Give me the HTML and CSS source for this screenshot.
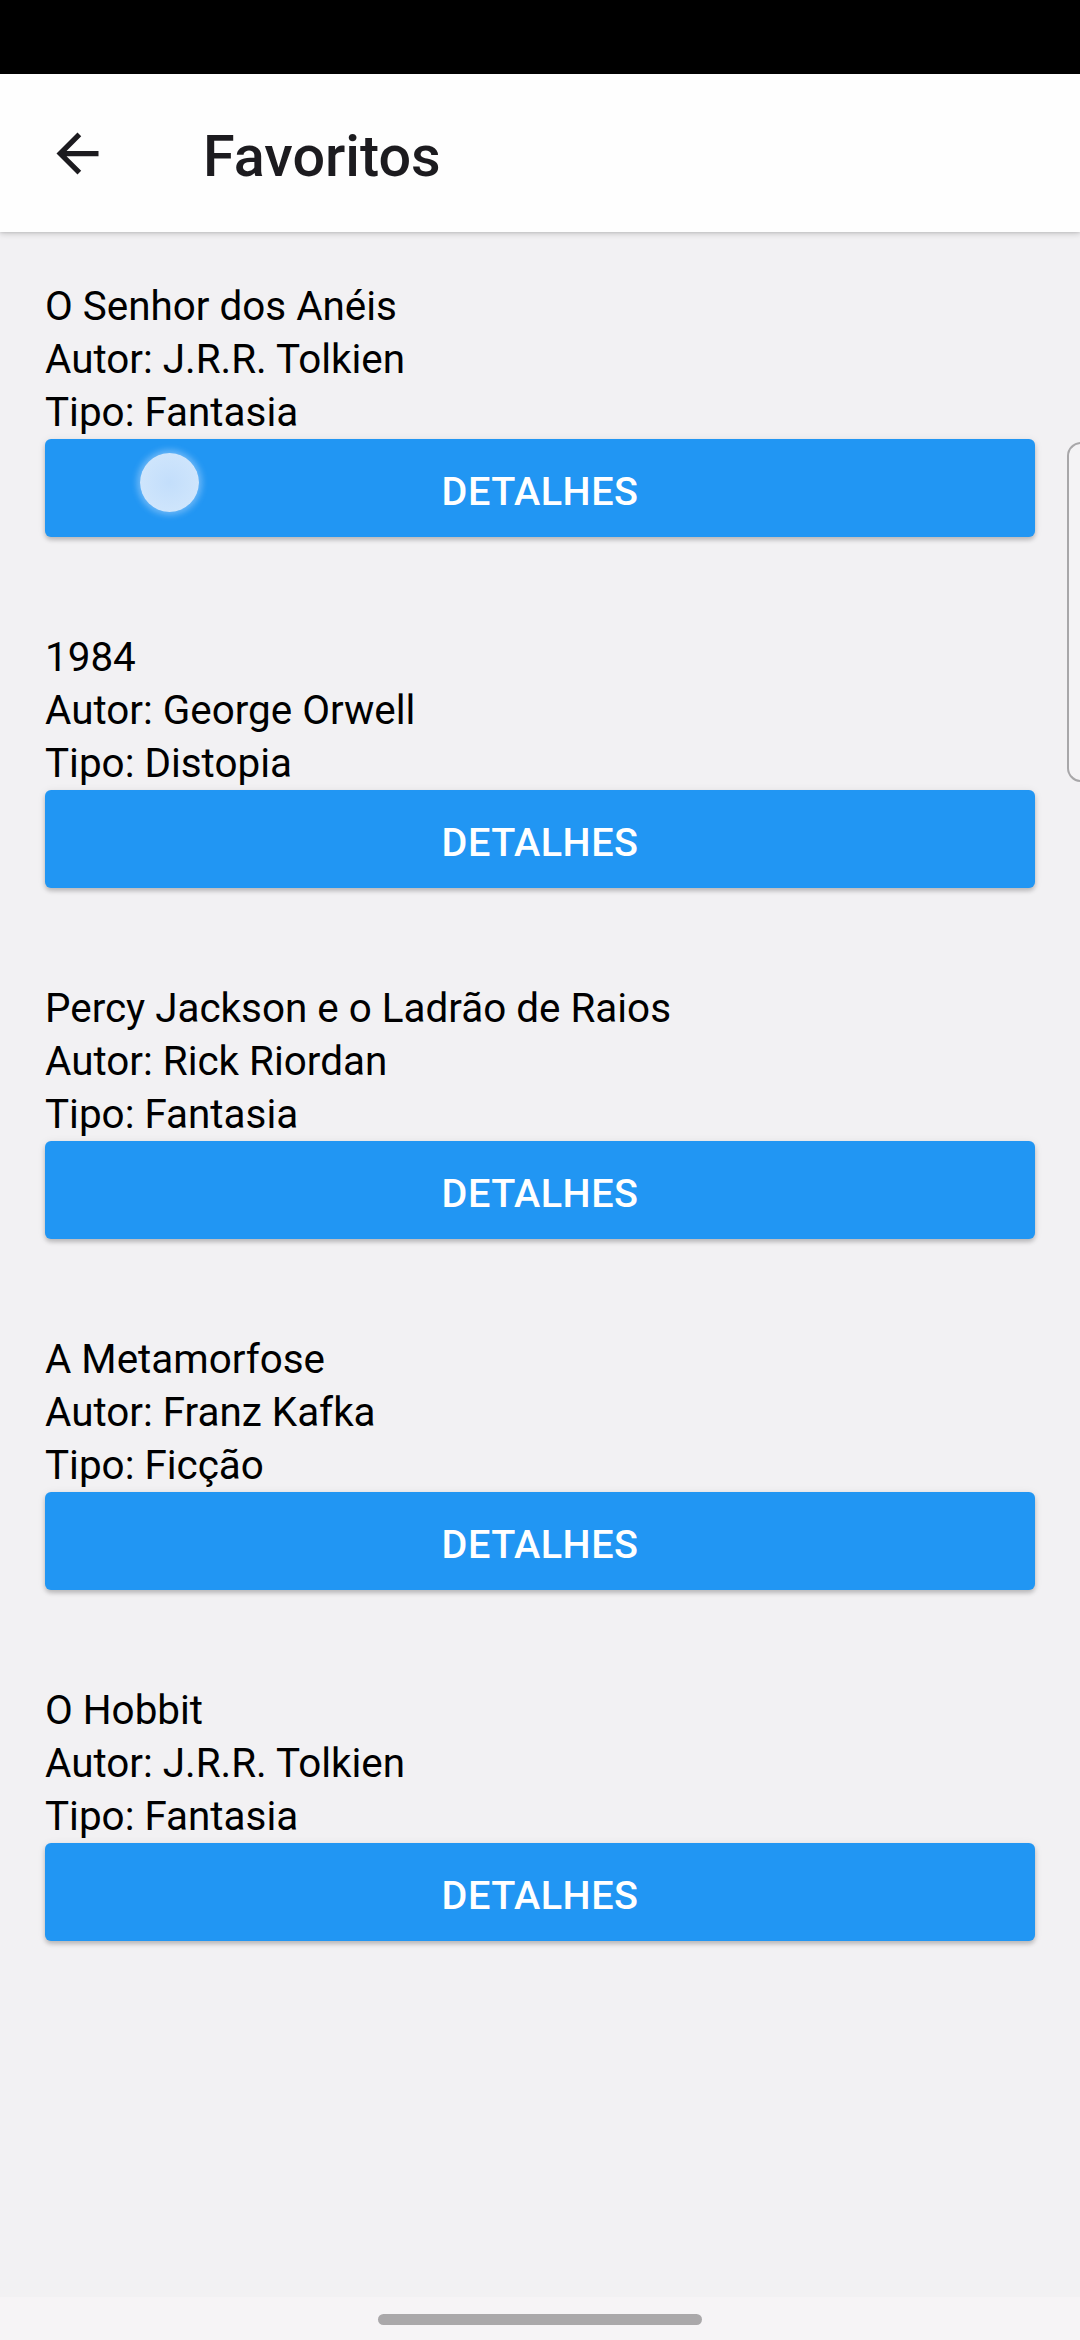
FILE: index.html
```html
<!DOCTYPE html>
<html lang="pt">
<head>
<meta charset="utf-8">
<title>Favoritos</title>
<link rel="stylesheet" href="styles.css">
</head>
<body>
<div class="screen">
  <div class="status"></div>
  <header class="appbar">
    <svg class="back" viewBox="0 0 24 24" aria-hidden="true"><path d="M20 11H7.83l5.59-5.59L12 4l-8 8 8 8 1.41-1.41L7.83 13H20v-2z"/></svg>
    <h1 class="title">Favoritos</h1>
  </header>
  <main class="list">
    <div class="item">
      <p class="line">O Senhor dos Anéis</p>
      <p class="line">Autor: J.R.R. Tolkien</p>
      <p class="line">Tipo: Fantasia</p>
      <button class="btn">DETALHES<span class="touch"></span></button>
    </div>
    <div class="item">
      <p class="line">1984</p>
      <p class="line">Autor: George Orwell</p>
      <p class="line">Tipo: Distopia</p>
      <button class="btn">DETALHES</button>
    </div>
    <div class="item">
      <p class="line">Percy Jackson e o Ladrão de Raios</p>
      <p class="line">Autor: Rick Riordan</p>
      <p class="line">Tipo: Fantasia</p>
      <button class="btn">DETALHES</button>
    </div>
    <div class="item">
      <p class="line">A Metamorfose</p>
      <p class="line">Autor: Franz Kafka</p>
      <p class="line">Tipo: Ficção</p>
      <button class="btn">DETALHES</button>
    </div>
    <div class="item">
      <p class="line">O Hobbit</p>
      <p class="line">Autor: J.R.R. Tolkien</p>
      <p class="line">Tipo: Fantasia</p>
      <button class="btn">DETALHES</button>
    </div>
  </main>
  <div class="edge-handle"></div>
  <footer class="navbar"><span class="pill"></span></footer>
</div>
</body>
</html>
```

FILE: styles.css
```css
* { box-sizing: border-box; }
html, body { margin: 0; padding: 0; }
body {
  width: 1080px;
  height: 2340px;
  background: #f2f1f3;
  font-family: Roboto, "Noto Sans", "Liberation Sans", sans-serif;
  overflow: hidden;
}
.screen {
  position: relative;
  width: 1080px;
  height: 2340px;
  display: flex;
  flex-direction: column;
}
.status {
  height: 74px;
  background: #000;
  flex: none;
}
.appbar {
  position: relative;
  z-index: 2;
  height: 158px;
  flex: none;
  background: #fefefe;
  display: flex;
  align-items: center;
  padding-left: 46px;
  gap: 94px;
  box-shadow: 0 2px 6px rgba(0, 0, 0, 0.16), 0 1px 2px rgba(0, 0, 0, 0.08);
}
.back {
  width: 63px;
  height: 63px;
  fill: #1c1b1f;
  flex: none;
}
.title {
  margin: 6px 0 0;
  font-size: 57.5px;
  font-weight: 500;
  color: #1c1b1f;
  letter-spacing: 0;
}
.list {
  flex: 1;
  padding: 48px 45px 0 45px;
}
.item {
  margin-bottom: 94px;
}
.line {
  margin: 0;
  font-size: 40.4px;
  line-height: 53px;
  color: #000;
}
.btn {
  position: relative;
  display: block;
  width: 990px;
  height: 98px;
  margin: 0;
  border: none;
  border-radius: 6px;
  background: #2196f3;
  color: #fff;
  font-family: Roboto, "Noto Sans", "Liberation Sans", sans-serif;
  font-size: 39.6px;
  font-weight: 500;
  letter-spacing: 0.5px;
  padding: 6px 0 0;
  box-shadow: 0 3px 4px rgba(0, 0, 0, 0.2), 0 1px 8px rgba(0, 0, 0, 0.08);
}
.touch {
  position: absolute;
  left: 95px;
  top: 14px;
  width: 59px;
  height: 59px;
  border-radius: 50%;
  background: radial-gradient(circle, #c3defb 0%, #d0e6fc 80%, #d8eafc 100%);
  box-shadow: 0 0 6px 3px rgba(200, 225, 252, 0.45);
}
.edge-handle {
  position: absolute;
  left: 1067px;
  top: 442px;
  width: 30px;
  height: 340px;
  border: 2px solid #a8a7a9;
  border-right: none;
  border-radius: 14px 0 0 14px;
  background: #f4f3f5;
}
.navbar {
  height: 43px;
  flex: none;
  background: #f6f4f6;
  display: flex;
  justify-content: center;
  padding-top: 17px;
}
.pill {
  width: 324px;
  height: 11px;
  border-radius: 6px;
  background: #aaa8aa;
}
```
